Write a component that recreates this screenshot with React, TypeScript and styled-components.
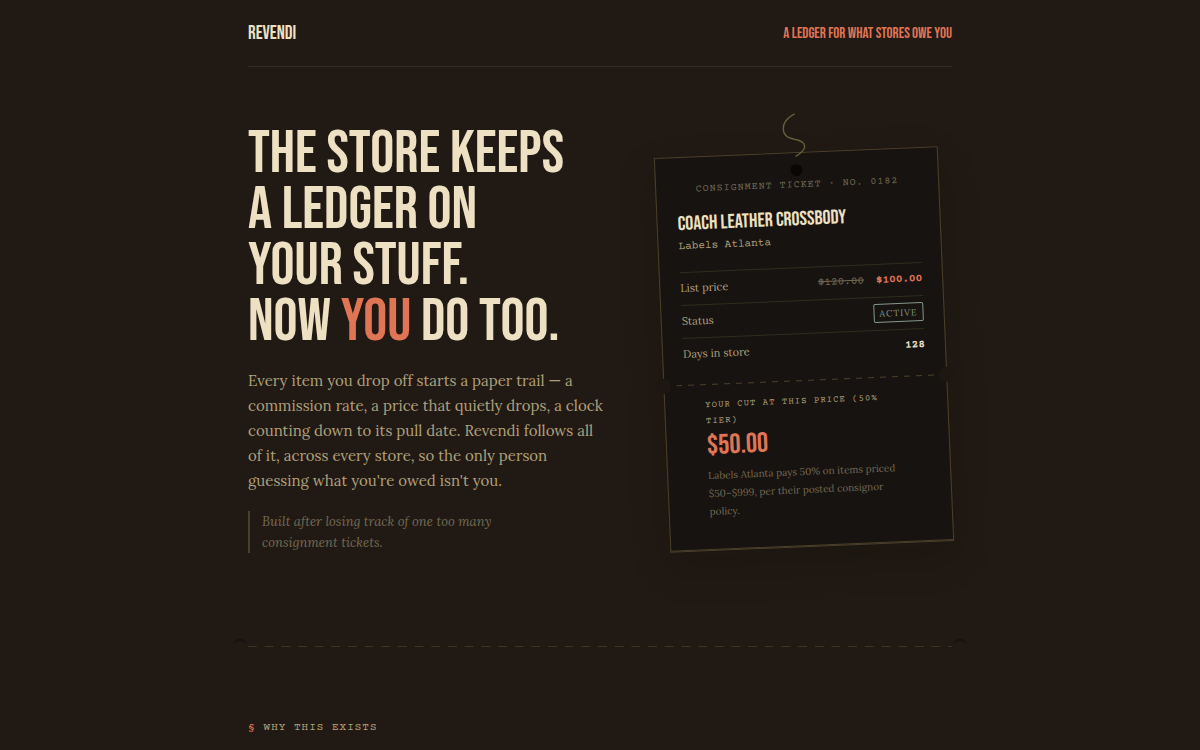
import React from "react";
import styled, { createGlobalStyle } from "styled-components";

const c = {
  page: "#211a14",
  ticket: "#171310",
  cream: "#ede0c3",
  sand: "#b0a07c",
  muted: "#746a53",
  coral: "#e07556",
  rule: "#2f2d1d",
  edge: "#4a4029",
  sage: "#84998c",
};

const display = '"Bebas Neue", "Liberation Sans Narrow", sans-serif';
const serif = '"Lora", "Liberation Serif", serif';
const mono = '"Courier Prime", "Liberation Mono", monospace';

const GlobalStyle = createGlobalStyle`
  *, *::before, *::after { box-sizing: border-box; }
  body { margin: 0; background: ${c.page}; color: ${c.cream}; font-family: ${serif}; }
  h1, h2, p, dl, dd, blockquote { margin: 0; }
`;

const Page = styled.div`
  max-width: 752px;
  margin: 0 auto;
  padding: 0 24px;
`;

const Header = styled.header`
  display: flex;
  justify-content: space-between;
  align-items: center;
  padding: 22px 0 20px;
  border-bottom: 1px solid ${c.rule};
  font-family: ${display};
  line-height: 24px;
  text-transform: uppercase;
`;

const Brand = styled.span`
  font-size: 19px;
`;

const Tagline = styled.span`
  font-size: 15px;
  color: ${c.coral};
`;

const Hero = styled.section`
  display: grid;
  grid-template-columns: minmax(0, 55fr) minmax(0, 45fr);
  gap: 48px;
  align-items: center;
  padding: 59px 0 56px;

  @media (max-width: 680px) {
    grid-template-columns: minmax(0, 1fr);
  }
`;

const Headline = styled.h1`
  font-family: ${display};
  font-size: 60px;
  font-weight: 400;
  line-height: 56px;
  text-transform: uppercase;
`;

const Accent = styled.span`
  color: ${c.coral};
`;

const Lede = styled.p`
  margin-top: 18px;
  font-size: 15px;
  line-height: 25px;
  color: ${c.sand};
`;

const Aside = styled.blockquote`
  max-width: 272px;
  margin-top: 18px;
  padding-left: 12px;
  border-left: 2px solid ${c.edge};
  font-size: 13px;
  font-style: italic;
  line-height: 21px;
  color: ${c.muted};
`;

const Ticket = styled.article`
  position: relative;
  justify-self: center;
  width: 100%;
  max-width: 284px;
  margin-top: 18px;
  border: 1px solid ${c.edge};
  background: ${c.ticket};
  box-shadow: 0 1px 0 ${c.edge}, 0 16px 36px rgba(10, 10, 0, 0.25);
  transform: rotate(-2.4deg);
`;

const Thread = styled.svg`
  position: absolute;
  top: -42px;
  left: 50%;
  margin-left: -16px;
`;

const Punch = styled.span`
  position: absolute;
  top: 11px;
  left: 50%;
  width: 12px;
  height: 12px;
  margin-left: -6px;
  border-radius: 50%;
  background: #090805;
`;

const TicketBody = styled.div`
  padding: 24px 20px 14px;
`;

const TicketNumber = styled.p`
  font-family: ${mono};
  font-size: 10px;
  line-height: 16px;
  letter-spacing: 1px;
  text-align: center;
  text-transform: uppercase;
  color: ${c.muted};
`;

const ItemName = styled.h2`
  margin-top: 14px;
  font-family: ${display};
  font-size: 20px;
  font-weight: 400;
  line-height: 24px;
  text-transform: uppercase;
`;

const StoreName = styled.p`
  margin-top: 3px;
  font-family: ${mono};
  font-size: 11px;
  line-height: 16px;
  color: ${c.sand};
`;

const Rows = styled.dl`
  margin-top: 17px;
`;

const Row = styled.div`
  display: flex;
  justify-content: space-between;
  align-items: center;
  height: 33px;
  padding-bottom: 2px;
  border-top: 1px solid ${c.rule};
`;

const RowLabel = styled.dt`
  font-size: 11px;
  color: ${c.sand};
`;

const RowValue = styled.dd`
  display: flex;
  gap: 12px;
  font-family: ${mono};
  font-size: 11px;
  font-weight: 700;
`;

const OldPrice = styled.s`
  font-weight: 400;
  color: ${c.muted};
`;

const Badge = styled.span`
  padding: 0 5px;
  border: 1px solid ${c.sage};
  border-radius: 2px;
  font-family: ${serif};
  font-size: 9px;
  font-weight: 400;
  line-height: 17px;
  letter-spacing: 1px;
  text-transform: uppercase;
  color: ${c.sage};
`;

const Perforation = styled.div`
  position: relative;
  height: 1px;
  margin: 0 12px;
  background: repeating-linear-gradient(90deg, ${c.edge} 0 6px, transparent 6px 12px);

  &::before,
  &::after {
    content: "";
    position: absolute;
    top: -7px;
    width: 15px;
    height: 15px;
    border-radius: 50%;
    background: #1c1711;
  }
  &::before { left: -20px; }
  &::after { right: -20px; }
`;

const Stub = styled.div`
  padding: 12px 40px 28px;
`;

const StubLabel = styled.p`
  font-family: ${mono};
  font-size: 9px;
  line-height: 16px;
  letter-spacing: 1px;
  text-transform: uppercase;
  color: ${c.sand};
`;

const Amount = styled.p`
  margin-top: 3px;
  font-family: ${display};
  font-size: 28px;
  line-height: 28px;
  color: ${c.coral};
`;

const Terms = styled.p`
  margin-top: 7px;
  font-size: 10px;
  line-height: 18px;
  color: ${c.muted};
`;

const TearLine = styled.div`
  position: relative;
  height: 1px;
  margin-top: 37px;
  background: linear-gradient(90deg, #3c3622 55%, transparent 55%) 0 0 / 2.37% 1px repeat-x;

  &::before,
  &::after {
    content: "";
    position: absolute;
    top: -7px;
    width: 14px;
    height: 14px;
    border-radius: 50%;
    background: ${c.page};
    box-shadow: inset 0 2px 2px -1px rgba(0, 0, 0, 0.5);
  }
  &::before { left: -15px; }
  &::after { right: -15px; }
`;

const Why = styled.section`
  padding: 73px 0 8px;
`;

const SectionLabel = styled.h2`
  display: flex;
  gap: 8px;
  font-family: ${mono};
  font-size: 11px;
  font-weight: 400;
  line-height: 16px;
  letter-spacing: 1px;
  text-transform: uppercase;
  color: ${c.sand};
`;

export default function App() {
  return (
    <>
      <GlobalStyle />
      <Page>
        <Header>
          <Brand>Revendi</Brand>
          <Tagline>A ledger for what stores owe you</Tagline>
        </Header>
        <main>
          <Hero>
            <div>
              <Headline>
                The store keeps
                <br />a ledger on
                <br />
                your stuff.
                <br />
                Now <Accent>you</Accent> do too.
              </Headline>
              <Lede>
                Every item you drop off starts a paper trail — a commission rate, a price that
                quietly drops, a clock counting down to its pull date. Revendi follows all of it,
                across every store, so the only person guessing what you're owed isn't you.
              </Lede>
              <Aside>Built after losing track of one too many consignment tickets.</Aside>
            </div>
            <Ticket>
              <Thread width="32" height="46" viewBox="0 0 32 46" fill="none" aria-hidden="true">
                <path
                  d="M16 3C8 7 3 13 5 21C7 26 11 27 15 28C21 29 26 32 25 37C23 41 20 43 16 45"
                  stroke="#655e3a"
                  strokeWidth="1.4"
                  strokeLinecap="round"
                />
              </Thread>
              <Punch />
              <TicketBody>
                <TicketNumber>Consignment ticket · No. 0182</TicketNumber>
                <ItemName>Coach leather crossbody</ItemName>
                <StoreName>Labels Atlanta</StoreName>
                <Rows>
                  <Row>
                    <RowLabel>List price</RowLabel>
                    <RowValue>
                      <OldPrice>$120.00</OldPrice>
                      <Accent>$100.00</Accent>
                    </RowValue>
                  </Row>
                  <Row>
                    <RowLabel>Status</RowLabel>
                    <RowValue>
                      <Badge>Active</Badge>
                    </RowValue>
                  </Row>
                  <Row>
                    <RowLabel>Days in store</RowLabel>
                    <RowValue>128</RowValue>
                  </Row>
                </Rows>
              </TicketBody>
              <Perforation />
              <Stub>
                <StubLabel>Your cut at this price (50% tier)</StubLabel>
                <Amount>$50.00</Amount>
                <Terms>
                  Labels Atlanta pays 50% on items priced $50–$999, per their posted consignor
                  policy.
                </Terms>
              </Stub>
            </Ticket>
          </Hero>
          <TearLine />
          <Why>
            <SectionLabel>
              <Accent>§</Accent>
              Why this exists
            </SectionLabel>
          </Why>
        </main>
      </Page>
    </>
  );
}
